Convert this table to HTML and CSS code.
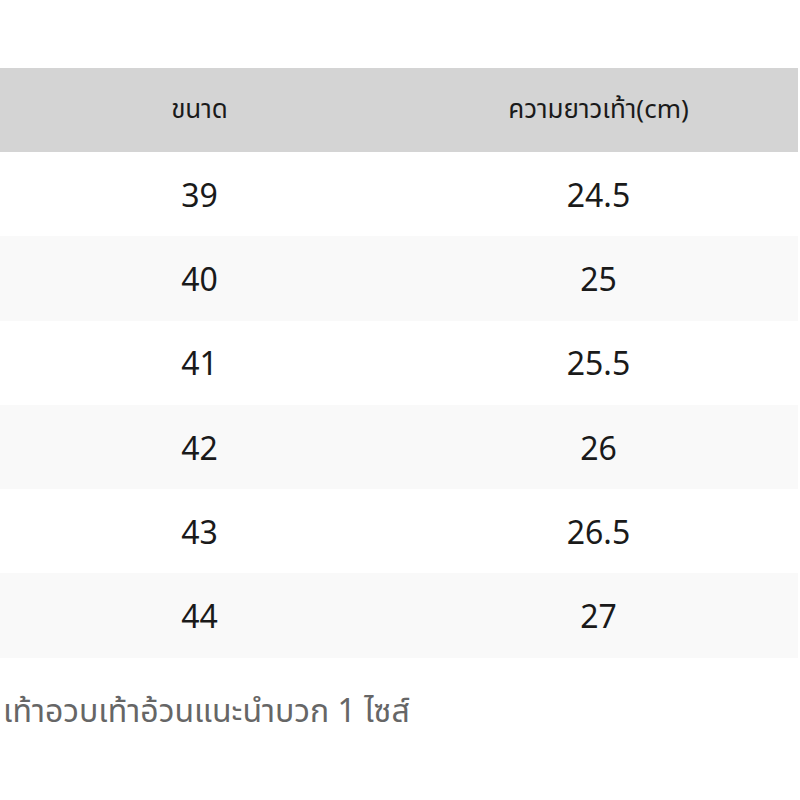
FILE: index.html
```html
<!DOCTYPE html>
<html lang="th">
<head>
<meta charset="utf-8">
<link rel="stylesheet" href="styles.css">
</head>
<body>
<div class="page">
  <table class="size-table">
    <thead>
      <tr><th>ขนาด</th><th>ความยาวเท้า(cm)</th></tr>
    </thead>
    <tbody>
      <tr><td>39</td><td>24.5</td></tr>
      <tr class="alt"><td>40</td><td>25</td></tr>
      <tr><td>41</td><td>25.5</td></tr>
      <tr class="alt"><td>42</td><td>26</td></tr>
      <tr><td>43</td><td>26.5</td></tr>
      <tr class="alt"><td>44</td><td>27</td></tr>
    </tbody>
  </table>
  <p class="note">เท้าอวบเท้าอ้วนแนะนำบวก 1 ไซส์</p>
</div>
</body>
</html>
```
FILE: styles.css
```css
html, body {
  margin: 0;
  padding: 0;
  background: #ffffff;
}
.page {
  padding-top: 68px;
  font-family: "Noto Sans", "Noto Sans Thai", "DejaVu Sans", sans-serif;
}
.size-table {
  width: 798px;
  border-collapse: collapse;
  table-layout: fixed;
}
.size-table th,
.size-table td {
  width: 50%;
  text-align: center;
  padding: 0;
  color: #1a1a1a;
}
.size-table th {
  height: 84px;
  background: #d4d4d4;
  font-weight: normal;
  font-size: 26px;
}
.size-table td {
  height: 84.3px;
  font-size: 32px;
}
.size-table tr.alt td {
  background: #f9f9f9;
}
.note {
  margin: 0;
  padding: 30px 0 0 3px;
  font-size: 32px;
  color: #666666;
}
```
